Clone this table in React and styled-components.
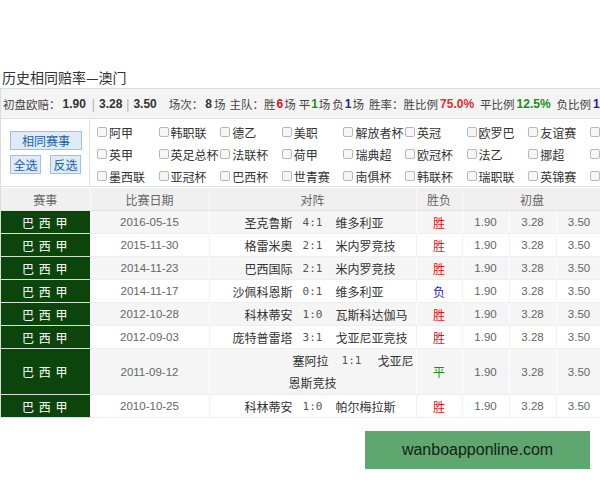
import React from 'react';
import styled, { createGlobalStyle } from 'styled-components';

const GlobalStyle = createGlobalStyle`
  html, body {
    margin: 0;
    padding: 0;
    background: #fff;
    overflow: hidden;
  }
  body {
    font-family: "Noto Sans CJK SC", "Liberation Sans", sans-serif;
    font-size: 12px;
    color: #333;
  }
`;

const Page = styled.div`
  position: relative;
  width: 640px;
  height: 480px;
  padding-top: 66px;
  box-sizing: border-box;
`;

const Title = styled.h2`
  margin: 0 0 0 2px;
  height: 22px;
  line-height: 22px;
  font-size: 14px;
  font-weight: normal;
  color: #333;
`;

const Box = styled.div`
  border-top: 1px solid #dcdcdc;
  border-left: 1px solid #dcdcdc;
`;

const Summary = styled.div`
  height: 29px;
  display: flex;
  align-items: center;
  padding-left: 2px;
  background: #f4f4f4;
  border-bottom: 1px solid #e2e2e2;
  white-space: nowrap;
  font-size: 11.5px;
  color: #444;
`;

const Label = styled.span`
  margin-left: ${p => p.$gap || 0}px;
`;

const Num = styled.span`
  font-family: "Liberation Sans", sans-serif;
  font-size: 12px;
  font-weight: bold;
  margin: 0 ${p => p.$pad ?? 0}px;
  color: ${p => p.$color || '#333'};
`;

const Sep = styled.span`
  color: #999;
  margin: 0 4px;
`;

const Filter = styled.div`
  display: flex;
  height: 67px;
  border-bottom: 1px solid #e2e2e2;
`;

const ButtonPanel = styled.div`
  flex: 0 0 79px;
  padding: 12px 0 0 9px;
  border-right: 1px solid #e2e2e2;
  display: flex;
  flex-wrap: wrap;
  align-content: flex-start;
  column-gap: 9px;
  row-gap: 5px;
`;

const Btn = styled.button`
  height: 19px;
  width: ${p => p.$w}px;
  padding: 0;
  border: 1px solid #9fc0e2;
  background: #deebf8;
  color: #1c5fa6;
  font-family: "Noto Sans CJK SC", sans-serif;
  font-size: 12px;
  line-height: 17px;
`;

const Checks = styled.div`
  flex: 0 0 auto;
  display: grid;
  grid-template-columns: repeat(9, 61.6px) 20px;
  grid-auto-rows: 22px;
  padding: 2px 0 0 7px;
`;

const CheckItem = styled.label`
  display: flex;
  align-items: center;
  gap: 2px;
  color: #333;
  white-space: nowrap;
`;

const Square = styled.span`
  width: 8px;
  height: 8px;
  border: 1px solid #b8b8b8;
  border-radius: 2px;
  background: #f6f6f6;
`;

const Table = styled.table`
  margin-top: 1px;
  width: 601px;
  table-layout: fixed;
  border-collapse: collapse;
`;

const Th = styled.th`
  height: 22px;
  padding: 0;
  background: #f0f0f0;
  color: #666;
  font-weight: normal;
  border-right: 1px solid #fafafa;
  border-bottom: 1px solid #e4e4e4;
`;

const Row = styled.tr`
  background: ${p => (p.$alt ? '#f5f5f5' : '#fff')};
`;

const League = styled.td`
  height: ${p => (p.$tall ? 45 : 22)}px;
  padding: 0;
  background: #0b450b;
  color: #fff;
  text-align: center;
  letter-spacing: 1px;
  border-bottom: 1px solid #d6e4d6;
  border-right: 1px solid #fff;
  white-space: pre;
`;

const Td = styled.td`
  padding: 0;
  text-align: center;
  border-bottom: 1px solid #eeeeee;
  border-right: 1px solid ${p => (p.$alt ? '#ffffff' : '#f2f2f2')};
  font-family: ${p => (p.$num ? '"Liberation Sans", sans-serif' : 'inherit')};
  font-size: ${p => (p.$num ? 11.5 : 12)}px;
  color: ${p => p.$color || '#666'};
`;

const Vs = styled.div`
  display: grid;
  grid-template-columns: 83px 40px 1fr;
  align-items: center;
  color: #333;
`;

const Home = styled.span`
  text-align: right;
  white-space: nowrap;
`;

const Score = styled.span`
  text-align: center;
  font-family: "DejaVu Sans Mono", monospace;
  font-size: 11px;
  color: #555;
`;

const Away = styled.span`
  text-align: left;
  padding-left: 3px;
  white-space: nowrap;
`;

const WrapVs = styled.div`
  color: #333;
  line-height: 22px;
`;

const WrapLine = styled.div`
  display: grid;
  grid-template-columns: 119px 46px 1fr;
`;

const WrapRest = styled.div`
  text-align: center;
`;

const Watermark = styled.div`
  position: absolute;
  left: 365px;
  top: 431px;
  width: 225px;
  height: 38px;
  background: #5ea76f;
  color: #1b1b1b;
  font-family: "Liberation Sans", sans-serif;
  font-size: 16px;
  display: flex;
  align-items: center;
  justify-content: center;
`;

// the tenth column is cut by the frame: only its boxes show
const checks = [
  ['阿甲', '韩职联', '德乙', '美职', '解放者杯', '英冠', '欧罗巴', '友谊赛', '', ''],
  ['英甲', '英足总杯', '法联杯', '荷甲', '瑞典超', '欧冠杯', '法乙', '挪超', '', ''],
  ['墨西联', '亚冠杯', '巴西杯', '世青赛', '南俱杯', '韩联杯', '瑞职联', '英锦赛', '', ''],
];

const resultColor = { 胜: '#e01010', 平: '#159015', 负: '#1a22b0' };

const matches = [
  ['2016-05-15', '圣克鲁斯', '4:1', '维多利亚', '胜'],
  ['2015-11-30', '格雷米奥', '2:1', '米内罗竞技', '胜'],
  ['2014-11-23', '巴西国际', '2:1', '米内罗竞技', '胜'],
  ['2014-11-17', '沙佩科恩斯', '0:1', '维多利亚', '负'],
  ['2012-10-28', '科林蒂安', '1:0', '瓦斯科达伽马', '胜'],
  ['2012-09-03', '庞特普雷塔', '3:1', '戈亚尼亚竞技', '胜'],
  ['2011-09-12', '塞阿拉', '1:1', '戈亚尼恩斯竞技', '平', true],
  ['2010-10-25', '科林蒂安', '1:0', '帕尔梅拉斯', '胜'],
];

export default function App() {
  return (
    <Page>
      <GlobalStyle />
      <Title>历史相同赔率—澳门</Title>
      <Box>
        <Summary>
          <Label>初盘欧赔：</Label>
          <Num $pad={2}>1.90</Num><Sep>|</Sep><Num>3.28</Num><Sep>|</Sep><Num>3.50</Num>
          <Label $gap={12}>场次：</Label><Num $pad={2}>8</Num><Label>场</Label>
          <Label $gap={4}>主队：胜</Label>
          <Num $pad={1} $color="#e01010">6</Num><Label>场</Label>
          <Label $gap={3}>平</Label>
          <Num $pad={1} $color="#159015">1</Num><Label>场</Label>
          <Label $gap={2}>负</Label>
          <Num $pad={1} $color="#1a22b0">1</Num><Label>场</Label>
          <Label $gap={5}>胜率：胜比例</Label>
          <Num $pad={2} $color="#e03030">75.0%</Num>
          <Label $gap={4}>平比例</Label>
          <Num $pad={2} $color="#159015">12.5%</Num>
          <Label $gap={4}>负比例</Label>
          <Num $pad={2} $color="#1a22b0">12.5%</Num>
        </Summary>
        <Filter>
          <ButtonPanel>
            <Btn $w={72}>相同赛事</Btn>
            <Btn $w={31}>全选</Btn>
            <Btn $w={31}>反选</Btn>
          </ButtonPanel>
          <Checks>
            {checks.flat().map((name, i) => (
              <CheckItem key={i}>
                <Square />
                {name}
              </CheckItem>
            ))}
          </Checks>
        </Filter>
        <Table>
          <colgroup>
            <col style={{ width: 89 }} />
            <col style={{ width: 119 }} />
            <col style={{ width: 207 }} />
            <col style={{ width: 46 }} />
            <col style={{ width: 47 }} />
            <col style={{ width: 47 }} />
            <col style={{ width: 46 }} />
          </colgroup>
          <thead>
            <tr>
              <Th>赛事</Th>
              <Th>比赛日期</Th>
              <Th>对阵</Th>
              <Th>胜负</Th>
              <Th colSpan={3}>初盘</Th>
            </tr>
          </thead>
          <tbody>
            {matches.map(([date, home, score, away, res, tall], i) => {
              const alt = i % 2 === 0;
              return (
                <Row key={date} $alt={alt}>
                  <League $tall={tall}>{'巴 西 甲'}</League>
                  <Td $alt={alt} $num>{date}</Td>
                  <Td $alt={alt}>
                    {tall ? (
                      <WrapVs>
                        <WrapLine>
                          <Home>{home}</Home>
                          <Score>{score}</Score>
                          <Away>{away.slice(0, 3)}</Away>
                        </WrapLine>
                        <WrapRest>{away.slice(3)}</WrapRest>
                      </WrapVs>
                    ) : (
                      <Vs>
                        <Home>{home}</Home>
                        <Score>{score}</Score>
                        <Away>{away}</Away>
                      </Vs>
                    )}
                  </Td>
                  <Td $alt={alt} $color={resultColor[res]}>{res}</Td>
                  <Td $alt={alt} $num>1.90</Td>
                  <Td $alt={alt} $num>3.28</Td>
                  <Td $alt={alt} $num>3.50</Td>
                </Row>
              );
            })}
          </tbody>
        </Table>
      </Box>
      <Watermark>wanboapponline.com</Watermark>
    </Page>
  );
}
